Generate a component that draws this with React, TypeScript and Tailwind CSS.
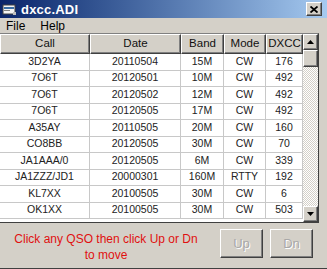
import React from "react";

const rows = [
  { call: "3D2YA", date: "20110504", band: "15M", mode: "CW", dxcc: "176" },
  { call: "7O6T", date: "20120501", band: "10M", mode: "CW", dxcc: "492" },
  { call: "7O6T", date: "20120502", band: "12M", mode: "CW", dxcc: "492" },
  { call: "7O6T", date: "20120505", band: "17M", mode: "CW", dxcc: "492" },
  { call: "A35AY", date: "20110505", band: "20M", mode: "CW", dxcc: "160" },
  { call: "CO8BB", date: "20120505", band: "30M", mode: "CW", dxcc: "70" },
  { call: "JA1AAA/0", date: "20120505", band: "6M", mode: "CW", dxcc: "339" },
  { call: "JA1ZZZ/JD1", date: "20000301", band: "160M", mode: "RTTY", dxcc: "192" },
  { call: "KL7XX", date: "20100505", band: "30M", mode: "CW", dxcc: "6" },
  { call: "OK1XX", date: "20100505", band: "30M", mode: "CW", dxcc: "503" },
];

const cols = [
  { key: "call", label: "Call", w: "w-[90px]" },
  { key: "date", label: "Date", w: "w-[91px]" },
  { key: "band", label: "Band", w: "w-[43px]" },
  { key: "mode", label: "Mode", w: "w-[42px]" },
  { key: "dxcc", label: "DXCC", w: "w-[37px]" },
];

function Arrow({ up }: { up?: boolean }) {
  return (
    <svg width="7" height="4" viewBox="0 0 7 4">
      {up ? <polygon points="3.5,0 7,4 0,4" fill="#000" /> : <polygon points="0,0 7,0 3.5,4" fill="#000" />}
    </svg>
  );
}

export default function App() {
  return (
    <div
      className="w-[327px] h-[269px] bg-[#d4d0c8] overflow-hidden flex flex-col border-b border-b-[#404040]"
      style={{ fontFamily: '"Liberation Sans", Arial, sans-serif' }}
    >
      {/* title bar */}
      <div className="h-[18px] flex items-center bg-gradient-to-r from-[#0a246a] to-[#a6caf0] shrink-0">
        <svg width="16" height="14" viewBox="0 0 16 14" className="ml-[2px]">
          <rect x="1" y="3" width="12" height="9" fill="#f4f4f4" stroke="#404040" strokeWidth="1" />
          <rect x="2" y="5" width="10" height="2" fill="#3a6ea5" />
          <rect x="2" y="8" width="6" height="1" fill="#808080" />
          <rect x="11" y="10" width="3" height="3" fill="#c0c0c0" />
        </svg>
        <span className="ml-[3px] text-[13px] font-bold text-white leading-none tracking-[0.2px]">dxcc.ADI</span>
        <div className="ml-auto mr-[5px] w-[16px] h-[14px] bg-[#d4d0c8] border border-t-white border-l-white border-r-[#404040] border-b-[#404040] shadow-[inset_-1px_-1px_0_#808080] flex items-center justify-center">
          <svg width="8" height="7" viewBox="0 0 8 7">
            <path d="M0.5 0.5 L7.5 6.5 M7.5 0.5 L0.5 6.5" stroke="#000" strokeWidth="1.8" />
          </svg>
        </div>
      </div>

      {/* menu */}
      <div className="h-[13px] flex items-center text-[12px] text-black leading-none shrink-0 mt-[1px]">
        <span className="ml-[6px]">File</span>
        <span className="ml-[15px]">Help</span>
      </div>

      {/* grid */}
      <div className="mt-[1px] h-[190px] w-[319px] flex border-t border-t-[#808080] border-b border-b-[#404040] border-r border-r-[#404040] bg-white shrink-0">
        <div className="w-[303px] flex flex-col">
          <div className="h-[20px] flex shrink-0">
            {cols.map((c) => (
              <div
                key={c.key}
                className={`${c.w} h-full bg-[#d4d0c8] border-t border-t-white border-l border-l-white border-r border-r-[#404040] border-b border-b-[#404040] shadow-[inset_-1px_-1px_0_#808080] flex items-center justify-center text-[11.5px] text-[#111]`}
              >
                {c.label}
              </div>
            ))}
          </div>
          {rows.map((r, i) => (
            <div key={i} className="h-[16.5px] flex shrink-0">
              {cols.map((c) => (
                <div
                  key={c.key}
                  className={`${c.w} h-full border-r border-b border-[#c8c8c8] flex items-center justify-center text-[10.5px] text-[#222]`}
                >
                  {(r as any)[c.key]}
                </div>
              ))}
            </div>
          ))}
        </div>
        <div className="w-[15px] flex flex-col bg-[repeating-conic-gradient(#d4d0c8_0%_25%,#ffffff_0%_50%)] bg-[length:2px_2px]">
          <div className="h-[16px] bg-[#d4d0c8] border border-t-white border-l-white border-r-[#404040] border-b-[#404040] shadow-[inset_-1px_-1px_0_#808080] flex items-center justify-center">
            <Arrow up />
          </div>
          <div className="h-[17px] bg-[#d4d0c8] border border-t-white border-l-white border-r-[#404040] border-b-[#404040] shadow-[inset_-1px_-1px_0_#808080]" />
          <div className="flex-1" />
          <div className="h-[16px] bg-[#d4d0c8] border border-t-white border-l-white border-r-[#404040] border-b-[#404040] shadow-[inset_-1px_-1px_0_#808080] flex items-center justify-center">
            <Arrow />
          </div>
        </div>
      </div>

      {/* bottom */}
      <div className="flex flex-1">
        <div className="w-[190px] ml-[11px] pt-[8px] text-center text-[12px] leading-[16px] text-[#e01010]">
          Click any QSO then click Up or Dn to move
        </div>
        <div className="flex gap-[7px] pt-[6px] ml-[19px]">
          {["Up", "Dn"].map((b) => (
            <div
              key={b}
              className="w-[43px] h-[29px] bg-[#d4d0c8] border border-t-white border-l-white border-r-[#404040] border-b-[#404040] shadow-[inset_-1px_-1px_0_#808080] flex items-center justify-center text-[13px] text-[#a8a8a8] [text-shadow:1px_1px_0_#ffffff]"
            >
              {b}
            </div>
          ))}
        </div>
      </div>
    </div>
  );
}
